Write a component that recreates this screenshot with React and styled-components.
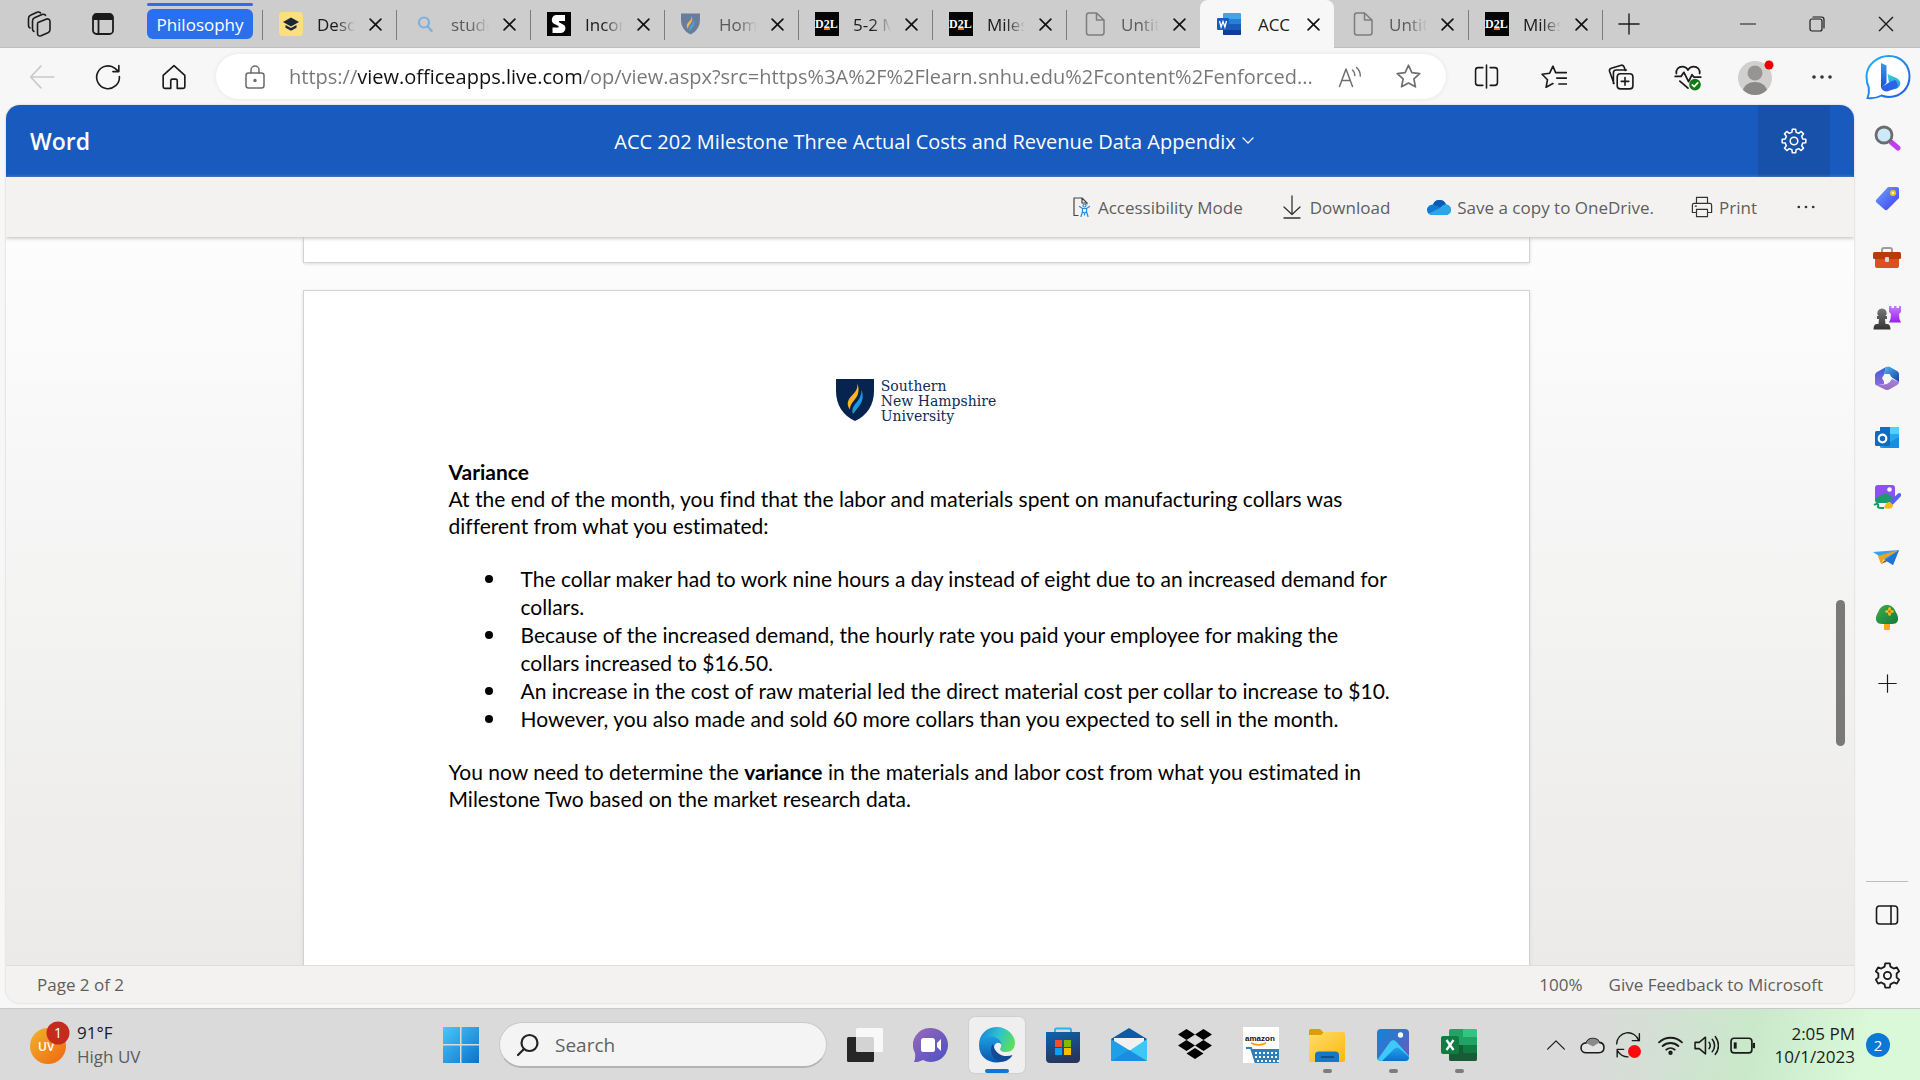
import React from "react";
import styled, { createGlobalStyle, css } from "styled-components";

const GlobalStyle = createGlobalStyle`
* {
  box-sizing: border-box;
}

body {
  margin: 0;
  font-family: "Open Sans", "Noto Sans", sans-serif;
  color: #1b1b1b;
}

button {
  display: inline-flex;
  align-items: center;
  justify-content: center;
  flex: none;
  padding: 0;
  border: 0;
  background: none;
  color: inherit;
  font: inherit;
}

a {
  color: inherit;
  text-decoration: none;
}

svg {
  display: block;
  flex: none;
}
`;

const Screen = styled.div`
  display: flex;
  flex-direction: column;
  height: 100vh;
  background: #f7f7f7;
  overflow: hidden;
`;

/* ---------- tab strip ---------- */

const TabStrip = styled.header`
  display: flex;
  align-items: center;
  height: 48px;
  flex: none;
  padding-left: 8px;
  background: #cdcdcd;
  box-shadow: inset 0 -1px 0 #bdbdbd;
`;

const StripButton = styled.button`
  width: ${(p) => p.$w || 63}px;
  height: 100%;
`;

const GroupLabel = styled.button`
  position: relative;
  width: 106px;
  height: 30px;
  margin: 0 9px 0 13px;
  border-radius: 6px;
  background: #2a6fee;
  color: #fff;
  font-size: 17px;

  &::before {
    content: "";
    position: absolute;
    top: -6px;
    left: 0;
    right: 0;
    height: 3px;
    border-radius: 2px;
    background: #2a6fee;
  }
`;

const TabList = styled.div`
  display: flex;
  height: 100%;
  margin-right: auto;
`;

const separator = css`
  background: linear-gradient(#7c7c7c, #7c7c7c) 0 10px / 1px 30px no-repeat;
`;

const Tab = styled.div`
  position: relative;
  display: flex;
  align-items: center;
  width: 134px;
  height: 100%;
  padding-left: 17px;
  color: ${(p) => (p.$dim ? "#5a5a5a" : "#1a1a1a")};

  ${(p) => p.$line && separator}

  ${(p) =>
    p.$active &&
    css`
      border-radius: 8px 8px 0 0;
      background: #f7f7f7;
      z-index: 1;
    `}
`;

const NewTab = styled.div`
  width: 54px;
  height: 100%;
  ${separator}
`;

const TabTitle = styled.button`
  justify-content: flex-start;
  gap: 14px;
  font-size: 17px;
`;

const TabText = styled.span`
  width: 38px;
  overflow: hidden;
  white-space: nowrap;
  mask-image: ${(p) => (p.$full ? "none" : "linear-gradient(90deg, #000 50%, transparent)")};
`;

const TabClose = styled.button`
  width: 28px;
  height: 28px;
  margin-left: 6px;
  color: #111;
`;

/* ---------- address row ---------- */

const AddressRow = styled.div`
  display: flex;
  align-items: center;
  height: 57px;
  flex: none;
  padding-left: 9px;
`;

const BarButton = styled.button`
  position: relative;
  width: ${(p) => p.$w || 67}px;
  height: 46px;
  color: ${(p) => p.$color || "#1a1a1a"};
`;

const AddressBox = styled.div`
  display: flex;
  align-items: center;
  flex: 1;
  min-width: 0;
  height: 45px;
  margin: 0 7px 0 9px;
  padding: 0 8px 0 10px;
  border-radius: 23px;
  background: #fff;
  box-shadow: 0 0 4px #e4e4e4;
`;

const AddressInput = styled.input`
  flex: 1;
  min-width: 0;
  margin-left: 5px;
  padding: 0;
  border: 0;
  outline: 0;
  font-family: inherit;
  font-size: 20px;
  color: transparent;
  background: linear-gradient(90deg, #767676 69px, #111 69px, #111 294px, #767676 294px);
  background-clip: text;
`;

/* ---------- word viewer ---------- */

const Main = styled.div`
  display: flex;
  flex: 1;
  min-height: 0;
`;

const Viewer = styled.main`
  display: flex;
  flex-direction: column;
  flex: 1;
  min-width: 0;
  margin: 0 0 5px 6px;
  border-radius: 14px;
  overflow: hidden;
  box-shadow: 0 0 2px #bcbcbc;
`;

const WordBar = styled.div`
  display: grid;
  grid-template-columns: 1fr auto 1fr;
  align-items: center;
  height: 72px;
  flex: none;
  padding: 0 24px;
  background: #185abd;
  color: #fff;
`;

const AppName = styled.a`
  font-size: 23px;
  font-weight: 600;
`;

const DocTitle = styled.button`
  gap: 6px;
  padding-left: 8px;
  font-size: 20px;
`;

const SettingsTile = styled.button`
  justify-self: end;
  width: 72px;
  height: 72px;
  background: #1751a9;
`;

const Commands = styled.div`
  position: relative;
  display: flex;
  align-items: center;
  justify-content: flex-end;
  gap: 37px;
  height: 60px;
  flex: none;
  padding-right: 36px;
  background: #f3f2f1;
  box-shadow: 0 1px 4px #b8b8b8;
  z-index: 1;
`;

const Command = styled.button`
  gap: 6px;
  color: #605e5c;
  font-size: 17px;
`;

const Reading = styled.div`
  display: flex;
  flex: 1;
  min-height: 0;
  background: linear-gradient(#fdfdfd, #ebeae9);
`;

const Pages = styled.div`
  display: flex;
  flex-direction: column;
  align-items: center;
  gap: 29px;
  flex: 1;
  min-width: 0;
  overflow: hidden;
`;

const Page = styled.article`
  width: 100%;
  max-width: 1225px;
  flex: none;
  min-height: ${(p) => (p.$tail ? 25 : 800)}px;
  padding: ${(p) => (p.$tail ? 0 : "88px 134px 88px 145px")};
  background: #fff;
  box-shadow: 0 0 0 1px #d2d3d6, 0 1px 4px #c8c8c8;
  font-family: Lato, "Open Sans", sans-serif;
  font-size: 21px;
  font-variant-ligatures: none;
  line-height: 27px;
  color: #000;
`;

const PageLogo = styled.div`
  display: flex;
  justify-content: center;
  gap: 7px;
  height: 43px;
  margin: 0 11px 36px 0;
`;

const LogoText = styled.div`
  font-family: "DejaVu Serif", serif;
  font-size: 14px;
  line-height: 15px;
  color: #0c2d57;
`;

const Heading = styled.h1`
  margin: 0;
  font-size: 21px;
  line-height: 27px;
  font-weight: 700;
`;

const Paragraph = styled.p`
  margin: 0 0 26px;
`;

const Bullets = styled.ul`
  margin: 0 0 25px;
  padding: 0 0 0 72px;
  list-style: none;
  line-height: 28px;
`;

const Bullet = styled.li`
  position: relative;

  &::before {
    content: "";
    position: absolute;
    left: -36px;
    top: 10px;
    width: 8px;
    height: 8px;
    border-radius: 50%;
    background: #000;
  }
`;

const ScrollRail = styled.div`
  display: flex;
  flex-direction: column;
  align-items: center;
  width: 28px;
`;

const RailSpace = styled.div`
  flex: ${(p) => p.$grow};
`;

const ScrollThumb = styled.div`
  width: 9px;
  height: 146px;
  border-radius: 5px;
  background: #7a7977;
`;

const StatusBar = styled.footer`
  display: flex;
  align-items: center;
  gap: 26px;
  height: 38px;
  flex: none;
  padding: 0 31px;
  border-top: 1px solid #dedddc;
  background: #f3f2f1;
  color: #605e5c;
  font-size: 17px;
`;

const PageCount = styled.span`
  margin-right: auto;
`;

/* ---------- edge sidebar ---------- */

const Sidebar = styled.aside`
  display: flex;
  flex-direction: column;
  align-items: center;
  width: 66px;
  padding: 3px 0;
`;

const SideButton = styled.button`
  width: 100%;
  height: 60px;
  margin-top: ${(p) => (p.$apart ? 5 : 0)}px;
`;

const SideRule = styled.hr`
  width: 42px;
  margin: auto 0 3px;
  border: 0;
  border-top: 1px solid #bdbdbd;
`;

/* ---------- windows taskbar ---------- */

const Taskbar = styled.nav`
  display: grid;
  grid-template-columns: 1fr auto 1fr;
  align-items: center;
  height: 72px;
  flex: none;
  padding: 2px 30px 0;
  background: linear-gradient(100deg, #dadada 83%, #c9e9ca 91%, #d9f9d9 97%);
  box-shadow: inset 0 1px 0 #c9c9c9;
`;

const Weather = styled.button`
  justify-self: start;
  gap: 7px;
  font-size: 17px;
  line-height: 24px;
  text-align: left;
`;

const WeatherNote = styled.span`
  display: block;
  color: #5c5c5c;
`;

const Apps = styled.div`
  display: flex;
  align-items: center;
  gap: 10px;
`;

const AppButton = styled.button`
  position: relative;
  width: 56px;
  height: 56px;
  border-radius: 6px;
  background: ${(p) => (p.$active ? "#efefef" : "none")};
  box-shadow: ${(p) => (p.$active ? "0 0 1px 1px #cfcfcf" : "none")};

  &::after {
    content: "";
    display: ${(p) => (p.$active || p.$open ? "block" : "none")};
    position: absolute;
    bottom: 0;
    width: ${(p) => (p.$active ? 24 : 9)}px;
    height: 4px;
    border-radius: 2px;
    background: ${(p) => (p.$active ? "#0a78d4" : "#7d7d7d")};
  }
`;

const SearchBox = styled.label`
  display: flex;
  align-items: center;
  gap: 15px;
  width: 328px;
  height: 46px;
  padding: 0 16px;
  border: 1px solid #c9c9c9;
  border-bottom: 2px solid #b4b4b4;
  border-radius: 23px;
  background: #f4f4f4;
`;

const SearchInput = styled.input`
  flex: 1;
  min-width: 0;
  padding: 0;
  border: 0;
  outline: 0;
  background: none;
  font-family: inherit;
  font-size: 19px;

  &::placeholder {
    color: #626262;
    opacity: 1;
  }
`;

const Tray = styled.div`
  display: flex;
  align-items: center;
  justify-self: end;
`;

const TrayButton = styled.button`
  width: 36px;
  height: 44px;
  margin-right: ${(p) => (p.$apart ? 6 : 0)}px;
`;

const Clock = styled.button`
  display: block;
  margin: 0 11px 0 14px;
  font-size: 17px;
  line-height: 23px;
  text-align: right;
`;

const ClockLine = styled.span`
  display: block;
`;

const Badge = styled.button`
  width: 24px;
  height: 24px;
  border-radius: 50%;
  background: #0a78d4;
  color: #fff;
  font-size: 15px;
`;

/* ---------- icons ---------- */

const Line = ({ size = 24, box = 24, w = 1.5, color = "currentColor", children }) => (
  <svg
    width={size}
    height={size}
    viewBox={`0 0 ${box} ${box}`}
    fill="none"
    stroke={color}
    strokeWidth={w}
    strokeLinecap="round"
    strokeLinejoin="round"
    aria-hidden="true"
  >
    {children}
  </svg>
);

const Art = ({ size = 36, box = 36, children }) => (
  <svg width={size} height={size} viewBox={`0 0 ${box} ${box}`} aria-hidden="true">
    {children}
  </svg>
);

const Grad = ({ id, from, to, x2 = 1, y2 = 1 }) => (
  <linearGradient id={id} x1="0" y1="0" x2={x2} y2={y2}>
    <stop offset="0" stopColor={from} />
    <stop offset="1" stopColor={to} />
  </linearGradient>
);

const gear = (teeth, outer, inner) => {
  const step = (Math.PI * 2) / teeth;
  const at = (r, a) => `${(12 + r * Math.sin(a)).toFixed(2)} ${(12 - r * Math.cos(a)).toFixed(2)}`;
  let d = "";
  for (let i = 0; i < teeth; i++) {
    const a = i * step;
    d += `${i ? "L" : "M"}${at(inner, a - step * 0.3)}L${at(outer, a - step * 0.18)}`;
    d += `L${at(outer, a + step * 0.18)}L${at(inner, a + step * 0.3)}`;
  }
  return d + "Z";
};

const Cross = ({ size = 13, w = 1.5 }) => (
  <Line size={size} box={12} w={w}>
    <path d="M1 1l10 10M11 1L1 11" />
  </Line>
);

const Plus = ({ size = 22 }) => (
  <Line size={size} w={1.5}>
    <path d="M12 1v22M1 12h22" />
  </Line>
);

const Dots = ({ size = 20, r = 1.8 }) => (
  <Art size={size} box={20}>
    {[2, 10, 18].map((x) => (
      <circle key={x} cx={x} cy="10" r={r} fill="#333" />
    ))}
  </Art>
);

const Workspaces = () => (
  <Line size={28} box={28} w={1.6}>
    <path d="M12 12.5l8-3.3c2-.8 4 .2 4 2.300v8c0 1.500-.8 2.700-2 3.200l-7 3c-2 .8-3.500-.2-3.500-2.200V14.500c0-1 .1-1.600.5-2z" />
    <path d="M8 21.500c-1-.5-1.500-1.300-1.500-2.500v-8c0-1.500.8-2.700 2-3.200l7.500-3.300c1.300-.5 2.700-.2 3.500.8" />
    <path d="M4 18c-1-.5-1.500-1.300-1.500-2.500v-7c0-1.500.8-2.700 2-3.200l6.500-3c1.300-.5 2.700-.2 3.500.6" />
  </Line>
);

const TabActions = () => (
  <Line size={24} w={1.8}>
    <rect x="2" y="2" width="20" height="20" rx="3.500" />
    <path d="M3 4h18v3H3z" fill="currentColor" />
    <path d="M7.500 8v14" />
  </Line>
);

const HatIcon = () => (
  <Art size={24} box={24}>
    <rect width="24" height="24" rx="4" fill="#fbdf7c" />
    <path d="M12 5.500l8 4.500-8 4.500L4 10z" fill="#1d2636" />
    <path d="M6.500 13v2.800l5.500 3 5.500-3V13L12 16z" fill="#1d2636" />
  </Art>
);

const FindIcon = () => (
  <Line size={24} w={2.2} color="#7eb0dc">
    <circle cx="11" cy="10.500" r="5" />
    <path d="M14.700 14.500l4 4.500" />
  </Line>
);

const SIcon = () => (
  <Art size={24} box={24}>
    <rect width="24" height="24" fill="#050505" />
    <path
      d="M18 3v6h-5.500c-.8 0-.8 1.200 0 1.600l4.500 2.400c2.500 1.500 2 8-3.500 8H5.500v-5.500H11c1 0 1-1.200 0-1.700L6.500 11.500C3.500 9.500 4.500 3 9.500 3z"
      fill="#fff"
    />
  </Art>
);

const Shield = ({ w = 38, h = 42, fill = "#06244d", soft }) => (
  <svg width={w} height={h} viewBox="0 0 38 42" opacity={soft ? 0.75 : 1} aria-hidden="true">
    <path d="M0 0h38v12c0 14-7 24.500-19 30C7 36.500 0 26 0 12z" fill={fill} />
    <path d="M21 4c1.500 5-1.500 9-5.500 13-5 5-4.500 10-1.500 13.500 0-5 3-7.500 5.500-11C23 15 23.500 9 21 4z" fill="#fdb71a" />
    <path d="M25.500 11c2 5 1.500 10-1 14-2 3.500-5 6.500-7.500 10-2-4 .5-8 3.500-11.500 3-3.500 5-7 5-12.500z" fill="#1b9ae2" />
  </svg>
);

const D2L = () => (
  <Art size={24} box={24}>
    <rect width="24" height="24" fill="#050505" />
    <text x="0" y="16" fontFamily="Liberation Serif, serif" fontSize="12" fontWeight="700" fill="#fff">
      D2L
    </text>
    <rect x="9" y="16" width="6" height="2" fill="#e87722" />
  </Art>
);

const FileIcon = () => (
  <Line size={24} w={1.5} color="#7d7d7d">
    <path d="M6 1h7.500L21 8v12.500c0 1.400-1 2.500-2.500 2.500H6c-1.500 0-2.500-1-2.500-2.500v-17C3.500 2 4.500 1 6 1zM13.500 1v7H21" />
  </Line>
);

const WordIcon = () => (
  <Art size={24} box={24}>
    <rect x="6" y="1" width="18" height="22" rx="1" fill="#41a5ee" />
    <path d="M6 7h18v5H6z" fill="#2b7cd3" />
    <path d="M6 12h18v6H6z" fill="#185abd" />
    <path d="M6 18h18v4a1 1 0 0 1-1 1H7a1 1 0 0 1-1-1z" fill="#103f91" />
    <rect y="6" width="12" height="12" rx="1" fill="#185abd" />
    <path d="M2.500 9l1.600 6L6 9.500 7.900 15l1.600-6" fill="none" stroke="#fff" strokeWidth="1.300" />
  </Art>
);

const StarPath = "M12 2l3 6.500 7 .9-5.200 4.800 1.400 7L12 17.800l-6.200 3.400 1.400-7L2 9.400l7-.9z";

const BingIcon = () => (
  <Art size={46} box={46}>
    <defs>
      <Grad id="bingEdge" from="#1fb6f5" to="#2357e0" />
      <Grad id="bingB" from="#2f9bf5" to="#1c4fe0" x2={0} />
      <Grad id="bingC" from="#38d5d0" to="#2a7cf0" x2={0} />
    </defs>
    <path
      d="M24 2c12 0 20.500 9 20.500 20.500S36 43 24 43c-3 0-5-.5-7.500-1.500C12 44 7 44.500 2.500 44c1.500-4 1.800-7 1.300-10.500C1.500 29 1.500 26 1.500 22.500 1.500 11 12 2 24 2z"
      fill="#fff"
      stroke="url(#bingEdge)"
      strokeWidth="2"
    />
    <path d="M16 9l5.500 2.500V29L16 34z" fill="url(#bingB)" />
    <path d="M16 33.500L24 29l-1.500-9 9 4c6 3 4 8.500.5 10.500L21.500 37z" fill="url(#bingC)" />
    <path d="M16 33.500l8-5 6-2.500c3 3 3 6 1.500 8L22 37.500c-3 0-5-1.500-6-4z" fill="#2b63e8" />
  </Art>
);

const sideIcons = [
  {
    name: "Search",
    art: (
      <>
        <path d="M18 18l7 6" stroke="#c23ff0" strokeWidth="5" strokeLinecap="round" />
        <circle cx="11" cy="11" r="8" fill="#cdeafc" stroke="#6c6c6c" strokeWidth="2.800" />
      </>
    ),
  },
  {
    name: "Shopping",
    art: (
      <>
        <Grad id="tag" from="#6ba9fb" to="#4038f2" />
        <path d="M15 3h9c1.500 0 2 1 2 2v9L14.500 25.500c-1 1-2 1-3 0l-8-7c-1-1-1-2 0-3z" fill="url(#tag)" />
        <circle cx="20" cy="9" r="2" fill="#fff" stroke="#f7c51d" strokeWidth="2" />
      </>
    ),
  },
  {
    name: "Tools",
    art: (
      <>
        <path d="M9 9V6c0-1 .5-2 2-2h6c1.500 0 2 1 2 2v3" fill="none" stroke="#9d9d9d" strokeWidth="2" />
        <path d="M2 13h24v9c0 1.200-.6 2-2 2H4c-1.400 0-2-.8-2-2z" fill="#db5023" />
        <rect x="0" y="8" width="28" height="7" rx="1.500" fill="#b93a0c" />
        <rect x="12" y="13" width="4" height="5" rx="1" fill="#d9d9d9" />
      </>
    ),
  },
  {
    name: "Games",
    art: (
      <>
        <Grad id="rook" from="#c77dfb" to="#9a1ff2" x2={0} />
        <Grad id="pawn" from="#777" to="#333" x2={0} />
        <path d="M16 2h2.500v2H21V2h2.500v2H26V2h2v6l-2 2 .5 5 1.500 3.500H16L17.500 15l.5-5-2-2z" fill="url(#rook)" />
        <path d="M9 4.500a4.500 4.500 0 0 1 3.500 7.500h1.500v3h-2l.5 5H14c2.500 0 3.500 2 3.500 5.500H.5C.5 22 1.500 20 4 20h1.500l.5-5H4v-3h1.500A4.500 4.500 0 0 1 9 4.500z" fill="url(#pawn)" />
      </>
    ),
  },
  {
    name: "Microsoft 365",
    art: (
      <>
        <Grad id="m365a" from="#3b5fd6" to="#8d6be0" x2={0} />
        <Grad id="m365b" from="#4fb8f5" to="#1a3f9b" />
        <Grad id="m365c" from="#a584e0" to="#9a6bbd" x2={0} />
        <path d="M13 3L4 8c-1 .7-2 2-2 3v8c0 1 .5 2 1.500 2.500L11 20v-9z" fill="url(#m365a)" />
        <path d="M13 3c2-1 3-.5 4 0l7 4c1.500 1 2 2 2 3.500V18l-8-5-7-3z" fill="url(#m365b)" />
        <path d="M3.500 21.500L11 25c2 1.200 4 1.200 6 0l7-4c1.500-1 2-2 2-3l-7-3-5 5z" fill="url(#m365c)" />
        <path d="M11.500 10h5l2.500 4-2.500 4.500h-5L9 14z" fill="#f7f7f7" />
      </>
    ),
  },
  {
    name: "Outlook",
    art: (
      <>
        <rect x="7" y="3" width="19" height="21" rx="1" fill="#28a8ea" />
        <path d="M7 3h10v7H7z" fill="#0f6fc4" />
        <path d="M17 3h9v7h-9z" fill="#50d0fa" />
        <path d="M26 13v11H8l9-6z" fill="#1490df" />
        <rect x="2" y="7" width="15" height="15" rx="1.500" fill="#0f6cbd" />
        <circle cx="9.500" cy="14.500" r="3.800" fill="none" stroke="#fff" strokeWidth="2.200" />
      </>
    ),
  },
  {
    name: "Image Creator",
    art: (
      <>
        <rect x="2" y="1" width="20" height="17" rx="3" fill="#8e50ef" />
        <path d="M2 15l8-5c2-1 3-1 5 0l5 4-5 5H4c-1.500 0-2-2-2-4z" fill="#1a9b6b" />
        <circle cx="16.500" cy="5.500" r="2.300" fill="#fff" />
        <path d="M16 18l9-8.500c2-1.500 4 .5 3 2.500l-8.500 9z" fill="#5562f2" />
        <path d="M11 24c1-3 2-6 6-6l3 3c0 3-3 5-9 3z" fill="#f7b91c" />
        <path d="M1 21c3-2 5-1 4 1s2 2 6 2" fill="none" stroke="#1a9b6b" strokeWidth="2" />
      </>
    ),
  },
  {
    name: "Drop",
    art: (
      <>
        <path d="M0 8l26-2-6 15-8-5z" fill="#35a3f0" />
        <path d="M26 6L12 16l8 5z" fill="#1e74d8" />
        <path d="M26 6L5 12l3 8 3-5z" fill="#f0a21a" />
        <path d="M8 20l4-4 2 1.500z" fill="#8e5a00" />
      </>
    ),
  },
  {
    name: "Tree",
    art: (
      <>
        <Grad id="tree" from="#3fae4c" to="#127a3e" />
        <rect x="11" y="18" width="6" height="8" rx="1" fill="#f7a823" />
        <path d="M14 1c4 0 7 2.500 8.500 6.500 2 3 3 6 2.500 8.500-.8 3-3 4-6 4H9c-3 0-5-1-6-4-.5-2.500.5-5.500 2.500-8.500C7 3.500 10 1 14 1z" fill="url(#tree)" />
        <path d="M16.500 4.500v6M13.500 7.500h6" stroke="#fbc314" strokeWidth="2.600" strokeLinecap="round" />
        <circle cx="16.500" cy="7.500" r="1.200" fill="#e2560c" />
      </>
    ),
  },
];

const apps = [
  {
    name: "Task View",
    art: (
      <>
        <rect y="10" width="27" height="25" rx="1.500" fill="#262626" />
        <rect x="9" y="1" width="27" height="24" rx="1.500" fill="#fff" opacity=".8" />
      </>
    ),
  },
  {
    name: "Chat",
    art: (
      <>
        <Grad id="chat" from="#9a68b8" to="#4c50c6" />
        <path d="M18 1a17 17 0 1 1-8 32c-3 1.500-6 2.300-9 2 1-2.500 1.500-5 1-9A17 17 0 0 1 18 1z" fill="url(#chat)" />
        <rect x="8" y="11" width="14" height="14" rx="2.500" fill="#fff" />
        <path d="M24 16l4-4v12l-4-4z" fill="#fff" />
      </>
    ),
  },
  {
    name: "Microsoft Edge",
    active: true,
    art: (
      <>
        <defs>
          <linearGradient id="edgeTop" x1="0" y1=".3" x2="1" y2=".6">
            <stop offset="0" stopColor="#1a86d8" />
            <stop offset=".5" stopColor="#2cc3cf" />
            <stop offset="1" stopColor="#5fe056" />
          </linearGradient>
          <Grad id="edgeLeft" from="#1b9de2" to="#0b56ae" x2={0} />
        </defs>
        <path d="M0 18C0 7 8 0 18 0s18 8 18 16c0 6-4 9-9 9-4 0-7-1.500-5.500-4 2-3 .5-9-7-9C7 12 1 15 0 18z" fill="url(#edgeTop)" />
        <path d="M0 18C1 12 6 9.500 11.500 9.500c7 0 11 4.500 11 8.500C20 14 15 16 15 21c0 7 6 13 13 12-12 6-28 1-28-15z" fill="url(#edgeLeft)" />
        <path d="M14 17c-5 6 0 19 11 17.500 4-1 7-3.500 8.500-6.500C26 31 16 28 14 17z" fill="#124a96" />
      </>
    ),
  },
  {
    name: "Microsoft Store",
    art: (
      <>
        <Grad id="store" from="#0d64ae" to="#27355f" x2={0.3} />
        <path d="M10 7V3c0-1 .5-1.500 1.500-1.500h13c1 0 1.500.5 1.500 1.500v4" fill="none" stroke="#29b3f2" strokeWidth="2" />
        <path d="M1 5h34v27c0 2.500-1.500 4-4 4H5c-2.500 0-4-1.500-4-4z" fill="url(#store)" />
        <path d="M10 13h7v7h-7z" fill="#f25022" />
        <path d="M19 13h7v7h-7z" fill="#7fba00" />
        <path d="M10 21h7v7h-7z" fill="#00a4ef" />
        <path d="M19 21h7v7h-7z" fill="#ffb900" />
      </>
    ),
  },
  {
    name: "Mail",
    art: (
      <>
        <path d="M0 12L18 1l18 11v6H0z" fill="#0d5aa8" />
        <path d="M3 11h30v6L18 25 3 17z" fill="#f1f1f1" />
        <path d="M0 12l36 22H1c-.6 0-1-.4-1-1z" fill="#1f9fe8" />
        <path d="M36 12L18 24l16 10h1c.6 0 1-.4 1-1z" fill="#3cc8f4" />
        <path d="M0 34l18-11 18 11z" fill="#1a8de0" />
      </>
    ),
  },
  {
    name: "Dropbox",
    art: (
      <path
        d="M9.500 2L18 7.500 9.500 13 1 7.500zM26.500 2L35 7.500 26.500 13 18 7.500zM9.500 13l8.500 5.500L9.500 24 1 18.500zM26.500 13l8.500 5.500-8.500 5.500-8.500-5.500zM18 21l8.500 5.500L18 32l-8.500-5.500z"
        fill="#000"
      />
    ),
  },
  {
    name: "Amazon",
    art: (
      <>
        <rect width="36" height="36" fill="#fff" />
        <text x="2" y="14" fontFamily="Liberation Sans, sans-serif" fontSize="8" fontWeight="700" fill="#111">
          amazon
        </text>
        <path d="M8 16c5 2.500 10 2.500 15 0" fill="none" stroke="#f90" strokeWidth="1.500" />
        <path d="M8 22h28v14H12z" fill="#2f7fb8" />
        <path d="M3 21h5l5 15" fill="none" stroke="#2f7fb8" strokeWidth="2" />
        <path d="M12 26h24M12 30h24M14 34h22" fill="none" stroke="#fff" strokeWidth="2" strokeDasharray="2 2" />
      </>
    ),
  },
  {
    name: "File Explorer",
    open: true,
    art: (
      <>
        <Grad id="folder" from="#ffdc6b" to="#fbb90b" />
        <path d="M0 4c0-1.200.8-2 2-2h9l4 4v4H0z" fill="#dd9d05" />
        <path d="M0 8h12l3-3h19c1.200 0 2 .8 2 2v26c0 1.200-.8 2-2 2H2c-1.200 0-2-.8-2-2z" fill="url(#folder)" />
        <path d="M6 35v-7c0-2 1.500-3.500 3.500-3.500h17c2 0 3.500 1.500 3.500 3.500v7z" fill="#1577ca" />
        <path d="M12 30h13" stroke="#0a447c" strokeWidth="1.500" />
      </>
    ),
  },
  {
    name: "Photos",
    open: true,
    art: (
      <>
        <Grad id="photo" from="#0d86d8" to="#7157b8" />
        <Grad id="peak" from="#1fa2ea" to="#0f6fcb" x2={0} />
        <rect x="2" y="2" width="32" height="32" rx="4" fill="url(#photo)" />
        <path d="M3 32l12-17c2-2.500 4.500-2.500 6.500 0L34 29v1c0 2.500-1.500 4-4 4H6c-1.500 0-2.500-.8-3-2z" fill="#3dcaf8" />
        <path d="M7 34l12-12c2-2 4-2 6 0l9 8c0 2.500-1.500 4-4 4z" fill="url(#peak)" />
        <circle cx="25.500" cy="8" r="2.700" fill="#fff" />
      </>
    ),
  },
  {
    name: "Excel",
    open: true,
    art: (
      <>
        <rect x="8" y="2" width="28" height="32" rx="2" fill="#21a366" />
        <path d="M22 2h12a2 2 0 0 1 2 2v6H22z" fill="#33c481" />
        <path d="M8 18h14v8h14v6a2 2 0 0 1-2 2H10a2 2 0 0 1-2-2z" fill="#185c37" />
        <path d="M22 18h14v8H22z" fill="#107c41" />
        <rect y="9" width="18" height="18" rx="2" fill="#107c41" />
        <path d="M5.500 13l7 10M12.500 13l-7 10" stroke="#fff" strokeWidth="2.200" />
      </>
    ),
  },
];

const tabs = [
  { title: "Desc", label: "Description", icon: <HatIcon />, line: true },
  { title: "stude", label: "Student search", icon: <FindIcon />, line: true, dim: true },
  { title: "Incom", label: "Income", icon: <SIcon />, line: true },
  { title: "Home", label: "Home", icon: <Art size={24} box={38}><Shield w={30} h={38} fill="#4a628c" soft /></Art>, line: true, dim: true },
  { title: "5-2 M", label: "5-2 Milestone", icon: <D2L />, line: true },
  { title: "Miles", label: "Milestone", icon: <D2L />, line: true },
  { title: "Untit", label: "Untitled", icon: <FileIcon />, line: true, dim: true },
  { title: "ACC", label: "ACC 202", icon: <WordIcon />, active: true },
  { title: "Untit", label: "Untitled", icon: <FileIcon />, dim: true },
  { title: "Miles", label: "Milestone", icon: <D2L />, line: true },
];

/* ---------- sections ---------- */

const BrowserTabs = () => (
  <TabStrip>
    <StripButton aria-label="Workspaces">
      <Workspaces />
    </StripButton>
    <StripButton aria-label="Tab actions">
      <TabActions />
    </StripButton>
    <GroupLabel>Philosophy</GroupLabel>
    <TabList>
      {tabs.map((t, i) => (
        <Tab key={i} $line={t.line} $dim={t.dim} $active={t.active}>
          <TabTitle aria-label={t.label}>
            {t.icon}
            <TabText $full={t.active}>{t.title}</TabText>
          </TabTitle>
          <TabClose aria-label="Close tab">
            <Cross />
          </TabClose>
        </Tab>
      ))}
      <NewTab>
        <StripButton $w={54} aria-label="New tab">
          <Plus />
        </StripButton>
      </NewTab>
    </TabList>
    <StripButton $w={69} aria-label="Minimize">
      <Line size={16} w={1.6}><path d="M0 12h24" /></Line>
    </StripButton>
    <StripButton $w={69} aria-label="Restore">
      <Line size={16} box={16} w={1.2}>
        <rect x="1" y="3" width="12" height="12" rx="2" />
        <path d="M4 1h8.500C14 1 15 2 15 3.500V12" />
      </Line>
    </StripButton>
    <StripButton $w={69} aria-label="Close window">
      <Cross size={16} w={1} />
    </StripButton>
  </TabStrip>
);

const Navigation = () => (
  <AddressRow>
    <BarButton $w={66} $color="#c9c9c9" aria-label="Back">
      <Line size={26}><path d="M23 12H1.500M11 2L1.500 12 11 22" /></Line>
    </BarButton>
    <BarButton $w={66} aria-label="Refresh">
      <Line size={26}><path d="M22.500 11.500A10.500 10.500 0 1 1 18.500 4L22 7M22 1.500V7h-5.500" /></Line>
    </BarButton>
    <BarButton $w={66} aria-label="Home">
      <Line size={26}><path d="M2 10.500L12 1.500l10 9V21c0 1-.6 1.500-1.500 1.500H15v-7c0-1-.5-1.500-1.500-1.500h-3C9.500 14 9 14.500 9 15.500v7H3.500c-1 0-1.500-.6-1.500-1.500z" /></Line>
    </BarButton>
    <AddressBox>
      <BarButton $w={58} $color="#6b6b6b" aria-label="Site information">
        <Line size={24}>
          <rect x="3" y="8" width="18" height="15" rx="2.500" />
          <path d="M8 8V5a4 4 0 0 1 8 0v3" />
          <circle cx="12" cy="15.500" r="1" fill="currentColor" />
        </Line>
      </BarButton>
      <AddressInput
        aria-label="Address"
        defaultValue="https://view.officeapps.live.com/op/view.aspx?src=https%3A%2F%2Flearn.snhu.edu%2Fcontent%2Fenforced..."
      />
      <BarButton $w={59} $color="#6f6f6f" aria-label="Read aloud">
        <Line size={24}>
          <path d="M1.500 21.500L8 4l6.500 17.500M4 15.500h8" />
          <path d="M14.500 5c1.500 1.300 2.300 3 2.300 5.500M18.500 2.500c2.500 2 3.800 5 3.800 8.500" />
        </Line>
      </BarButton>
      <BarButton $w={59} $color="#6f6f6f" aria-label="Add to favorites">
        <Line size={27}><path d={StarPath} /></Line>
      </BarButton>
    </AddressBox>
    <BarButton aria-label="Split screen">
      <Line size={25}>
        <path d="M12 1v22M8.500 3.500H4C2.500 3.500 1.500 4.500 1.500 6v12c0 1.500 1 2.500 2.500 2.500h4.500M15.500 3.500H20c1.500 0 2.500 1 2.500 2.500v12c0 1.500-1 2.500-2.500 2.500h-4.500" />
      </Line>
    </BarButton>
    <BarButton aria-label="Favorites">
      <Line size={26}>
        <path d="M13.500 8L11 2 8 8.500l-7 1 5 5-1.300 7L11 18M13.500 8h10M14.500 13h9M16.500 18.500h7" />
      </Line>
    </BarButton>
    <BarButton aria-label="Collections">
      <Line size={26}>
        <rect x="8.500" y="9" width="14.500" height="14" rx="3" />
        <path d="M15.700 12.500v7M12.200 16h7M5.500 18l-4-11C1 5.500 1.700 4.300 3 4l8.500-2.700c1.500-.5 3 .2 3.500 1.700L16 6M5 18V8c0-1.500 1-2.500 2.500-2.500H17" />
      </Line>
    </BarButton>
    <BarButton aria-label="Browser essentials">
      <Line size={28}>
        <path d="M2 9c-.5-3.500 2-6 5-6 2 0 4 1 5 3 1-2 3-3 5-3 3 0 5.500 2.500 5 6M1 11.500h5L8.500 8l4 8 3-6 1.500 2h6M5 15.500l7 6" />
        <circle cx="18" cy="18.500" r="5" fill="#107c10" stroke="none" />
        <path d="M15.800 18.700l1.500 1.500 3-3.200" stroke="#fff" />
      </Line>
    </BarButton>
    <BarButton aria-label="Profile">
      <Art size={38} box={38}>
        <circle cx="19" cy="20" r="17" fill="#d2d0ce" />
        <circle cx="19" cy="15" r="7.500" fill="#979593" />
        <path d="M7 32c1.500-5 6-8 12-8s10.500 3 12 8a17 17 0 0 1-24 0z" fill="#8a8886" />
        <circle cx="33" cy="7" r="4.500" fill="#e60000" />
      </Art>
    </BarButton>
    <BarButton aria-label="Settings and more">
      <Dots />
    </BarButton>
    <BarButton $w={65} aria-label="Bing">
      <BingIcon />
    </BarButton>
  </AddressRow>
);

const WordViewer = () => (
  <Viewer>
    <WordBar>
      <AppName href="#word">Word</AppName>
      <DocTitle>
        ACC 202 Milestone Three Actual Costs and Revenue Data Appendix
        <Line size={12} box={12} w={1.3}><path d="M1 3l5 5 5-5" /></Line>
      </DocTitle>
      <SettingsTile aria-label="Settings">
        <Line size={26} w={1.4}>
          <path d={gear(8, 11, 8.3)} />
          <circle cx="12" cy="12" r="3.500" />
        </Line>
      </SettingsTile>
    </WordBar>
    <Commands>
      <Command>
        <Line size={20} box={20} w={1.2}>
          <path d="M6 18.500H2V1h8l5 5v1M10 1v5h5" stroke="#444" />
          <g stroke="#2b88d8">
            <circle cx="12.500" cy="8.500" r="1.500" />
            <path d="M7.500 9.500l3 2h4l3-2M10.500 11.500v3L9 19.500M14.500 11.500v3l1.500 5M10.500 15l2 1 2-1M12.500 16v2" />
          </g>
        </Line>
        Accessibility Mode
      </Command>
      <Command>
        <Line size={24} w={1.3} color="#333"><path d="M12 1v18M4 12l8 7.500 8-7.500M4 23h16" /></Line>
        Download
      </Command>
      <Command>
        <Art size={24} box={24}>
          <path d="M6 9.500a7 7 0 0 1 13 0c3 .3 5 2.500 5 5.200 0 2.800-2.300 5.300-5.500 5.300h-13C2 20 0 17.500 0 14.700 0 12 2.500 9.700 6 9.500z" fill="#0f7ad6" />
          <path d="M6 9.500a7 7 0 0 1 13 0c-3 0-4 1.500-5 3L6 9.500z" fill="#0a5cb0" />
          <path d="M2 18.500l11-5.500c2-3 5-3.500 6-3.500 3 .3 5 2.500 5 5.200 0 2.800-2.300 5.300-5.500 5.300h-13c-1.500 0-2.700-.5-3.500-1.500z" fill="#28a8ea" />
        </Art>
        Save a copy to OneDrive.
      </Command>
      <Command>
        <Line size={22} w={1.3} color="#333">
          <path d="M6 8V1.500h12V8M6 18H1.500V10c0-1.200.8-2 2-2h17c1.200 0 2 .8 2 2v8H18M6 14.500h12v8H6zM4.500 11h1.500" />
        </Line>
        Print
      </Command>
      <BarButton $w={24} aria-label="More commands">
        <Dots size={18} r={1.5} />
      </BarButton>
    </Commands>
    <Reading>
      <Pages>
        <Page $tail />
        <Page>
          <PageLogo>
            <Shield />
            <LogoText>
              Southern<br />
              New Hampshire<br />
              University
            </LogoText>
          </PageLogo>
          <Heading>Variance</Heading>
          <Paragraph>
            At the end of the month, you find that the labor and materials spent on manufacturing collars was
            different from what you estimated:
          </Paragraph>
          <Bullets>
            <Bullet>
              The collar maker had to work nine hours a day instead of eight due to an increased demand for collars.
            </Bullet>
            <Bullet>
              Because of the increased demand, the hourly rate you paid your employee for making the collars
              increased to $16.50.
            </Bullet>
            <Bullet>
              An increase in the cost of raw material led the direct material cost per collar to increase to $10.
            </Bullet>
            <Bullet>However, you also made and sold 60 more collars than you expected to sell in the month.</Bullet>
          </Bullets>
          <Paragraph>
            You now need to determine the <b>variance</b> in the materials and labor cost from what you estimated in
            Milestone Two based on the market research data.
          </Paragraph>
        </Page>
      </Pages>
      <ScrollRail>
        <RailSpace $grow={363} />
        <ScrollThumb />
        <RailSpace $grow={219} />
      </ScrollRail>
    </Reading>
    <StatusBar>
      <PageCount>Page 2 of 2</PageCount>
      <button>100%</button>
      <a href="#feedback">Give Feedback to Microsoft</a>
    </StatusBar>
  </Viewer>
);

const EdgeSidebar = () => (
  <Sidebar>
    {sideIcons.map((s) => (
      <SideButton key={s.name} aria-label={s.name}>
        <Art size={28} box={28}>{s.art}</Art>
      </SideButton>
    ))}
    <SideButton $apart aria-label="Add app">
      <Plus size={19} />
    </SideButton>
    <SideRule />
    <SideButton aria-label="Hide sidebar">
      <Line size={24} w={1.6}>
        <rect x="1.500" y="3" width="21" height="18" rx="3" />
        <path d="M16 3v18" />
      </Line>
    </SideButton>
    <SideButton aria-label="Sidebar settings">
      <Line size={27} w={1.6}>
        <path d={gear(6, 11, 8.3)} />
        <circle cx="12" cy="12" r="3.200" />
      </Line>
    </SideButton>
  </Sidebar>
);

const WindowsBar = () => (
  <Taskbar>
    <Weather>
      <svg width="40" height="48" viewBox="0 0 40 48" aria-hidden="true">
        <Grad id="uv" from="#efb52c" to="#f3640f" />
        <circle cx="18" cy="25" r="18" fill="url(#uv)" />
        <text x="8" y="30" fontFamily="Open Sans, sans-serif" fontSize="12" fontWeight="600" fill="#fff">UV</text>
        <circle cx="28" cy="12" r="11.500" fill="#c42b1c" />
        <text x="24" y="17" fontFamily="Open Sans, sans-serif" fontSize="14" fill="#fff">1</text>
      </svg>
      <span>
        91°F
        <WeatherNote>High UV</WeatherNote>
      </span>
    </Weather>
    <Apps>
      <AppButton aria-label="Start">
        <Art>
          <Grad id="win" from="#4cc6f8" to="#0873cf" />
          <path d="M0 0h17v17H0zM18.500 0H36v17H18.500zM0 18.500h17V36H0zM18.500 18.500H36V36H18.500z" fill="url(#win)" />
        </Art>
      </AppButton>
      <SearchBox>
        <Line size={24} w={2.2} color="#222">
          <circle cx="13.500" cy="10" r="8" />
          <path d="M8 16l-6 6" />
        </Line>
        <SearchInput aria-label="Search" placeholder="Search" />
      </SearchBox>
      {apps.map((a) => (
        <AppButton key={a.name} $active={a.active} $open={a.open} aria-label={a.name}>
          <Art>{a.art}</Art>
        </AppButton>
      ))}
    </Apps>
    <Tray>
      <TrayButton aria-label="Show hidden icons">
        <Line size={20}><path d="M2 17L12 7l10 10" /></Line>
      </TrayButton>
      <TrayButton aria-label="OneDrive">
        <Line size={25} w={1.5}>
          <path d="M6 9.500a7 7 0 0 1 12.500-.5c3 .3 4.500 2.500 4.500 5 0 3-2 5-5 5H6c-3 0-5-2-5-4.700C1 11.500 3 9.500 6 9.500z" fill="#e4e4e4" />
          <path d="M6 9.500a7 7 0 0 1 12.500-.5l-6 4z" fill="#8a8a8a" stroke="none" />
        </Line>
      </TrayButton>
      <TrayButton $apart aria-label="Windows Update">
        <Line size={26} w={1.3}>
          <path d="M1.500 11A10.500 10.500 0 0 1 22 8M22.500 1.500V8H16M2 16h6M2 16v7M2 17c2.500 4 6 6 10 6" />
          <circle cx="18" cy="18" r="6" fill="#ff0a0a" stroke="none" />
        </Line>
      </TrayButton>
      <TrayButton aria-label="Wi-Fi">
        <Line size={25} w={1.8}>
          <path d="M1 9a16 16 0 0 1 22 0M4.500 12.500a11 11 0 0 1 15 0M8 16a6 6 0 0 1 8 0" />
          <circle cx="12" cy="19" r="1.200" fill="currentColor" />
        </Line>
      </TrayButton>
      <TrayButton aria-label="Volume">
        <Line size={25}>
          <path d="M1 9v6h4l6 5V4L5 9zM14.500 9c1.300 1.800 1.300 4.200 0 6M17.500 6c3 3.500 3 8.500 0 12M20.500 3.500c4 5 4 12 0 17" />
        </Line>
      </TrayButton>
      <TrayButton aria-label="Battery">
        <Line size={25} w={1.6}>
          <rect x="1" y="5" width="20" height="14" rx="3" />
          <path d="M23 10.500v3" strokeWidth="2.500" />
          <path d="M5 9v6" strokeWidth="2.800" strokeLinecap="butt" />
        </Line>
      </TrayButton>
      <Clock>
        <ClockLine>2:05 PM</ClockLine>
        <ClockLine>10/1/2023</ClockLine>
      </Clock>
      <Badge>2</Badge>
    </Tray>
  </Taskbar>
);

const App = () => (
  <Screen>
    <GlobalStyle />
    <BrowserTabs />
    <Navigation />
    <Main>
      <WordViewer />
      <EdgeSidebar />
    </Main>
    <WindowsBar />
  </Screen>
);

export default App;
